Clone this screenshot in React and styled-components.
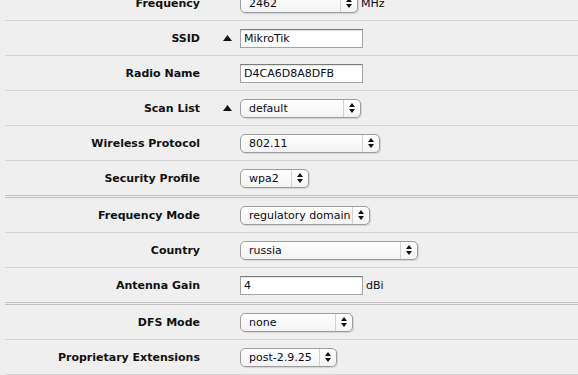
import React from 'react'
import styled, { createGlobalStyle } from 'styled-components'

const GlobalStyle = createGlobalStyle`
  html, body {
    margin: 0;
    padding: 0;
    background: #efefef;
    overflow: hidden;
  }
  body {
    font-family: "DejaVu Sans", Verdana, sans-serif;
  }
`

const Page = styled.div`
  width: 578px;
  height: 375px;
  overflow: hidden;
  background: #efefef;
`

const Form = styled.div`
  margin: -14px 0 0 5px;
`

const Row = styled.div`
  display: grid;
  grid-template-columns: 195px 40px 1fr;
  align-items: center;
  height: 34px;
  border-bottom: ${(p) => (p.groupEnd ? '3px double #c2c2c2' : '1px solid #d6d6d6')};
`

const Label = styled.div`
  text-align: right;
  font-size: 11px;
  font-weight: bold;
  color: #111;
  white-space: nowrap;
`

const ToggleCell = styled.div`
  display: flex;
  justify-content: flex-end;
  padding-right: 8px;
`

const Field = styled.div`
  display: flex;
  align-items: center;
  gap: 3px;
`

const TextInput = styled.div`
  box-sizing: border-box;
  width: ${(p) => p.width}px;
  height: 19px;
  background: #fff;
  border: 1px solid #a3a3a3;
  border-top-color: #7a7a7a;
  box-shadow: inset 0 1px 1px rgba(0, 0, 0, 0.12);
  font-size: 11px;
  line-height: 17px;
  padding-left: 3px;
  color: #0a0a1a;
  white-space: nowrap;
`

const SelectBox = styled.div`
  box-sizing: border-box;
  display: flex;
  width: ${(p) => p.width}px;
  height: 19px;
  border: 1px solid #9c9c9c;
  border-radius: 5px;
  background: linear-gradient(#ffffff, #f3f3f3);
  box-shadow: 1px 1px 1px rgba(0, 0, 0, 0.12);
`

const SelectText = styled.div`
  flex: 1;
  font-size: 11px;
  line-height: 17px;
  padding-left: 8px;
  color: #0a0a1a;
  white-space: nowrap;
  overflow: hidden;
`

const SelectArrows = styled.div`
  width: 16px;
  border-left: 1px solid #d2d2d2;
  display: flex;
  align-items: center;
  justify-content: center;
`

const Unit = styled.span`
  font-size: 11px;
  color: #0a0a1a;
`

const Toggle = () => (
  <svg width="9" height="6" viewBox="0 0 9 6">
    <path d="M0 6 L4.5 0 L9 6 Z" fill="#111" />
  </svg>
)

const Arrows = () => (
  <svg width="6" height="10" viewBox="0 0 6 10">
    <path d="M0 4 L3 0 L6 4 Z" fill="#111" />
    <path d="M0 6 L3 10 L6 6 Z" fill="#111" />
  </svg>
)

const Select = ({ width, value }) => (
  <SelectBox width={width}>
    <SelectText>{value}</SelectText>
    <SelectArrows>
      <Arrows />
    </SelectArrows>
  </SelectBox>
)

const rows = [
  { label: 'Frequency', type: 'select', value: '2462', width: 118, unit: 'MHz' },
  { label: 'SSID', type: 'input', value: 'MikroTik', width: 123, toggle: true },
  { label: 'Radio Name', type: 'input', value: 'D4CA6D8A8DFB', width: 123 },
  { label: 'Scan List', type: 'select', value: 'default', width: 121, toggle: true },
  { label: 'Wireless Protocol', type: 'select', value: '802.11', width: 140 },
  { label: 'Security Profile', type: 'select', value: 'wpa2', width: 69, groupEnd: true },
  { label: 'Frequency Mode', type: 'select', value: 'regulatory domain', width: 130 },
  { label: 'Country', type: 'select', value: 'russia', width: 178 },
  { label: 'Antenna Gain', type: 'input', value: '4', width: 123, unit: 'dBi', groupEnd: true },
  { label: 'DFS Mode', type: 'select', value: 'none', width: 113 },
  { label: 'Proprietary Extensions', type: 'select', value: 'post-2.9.25', width: 97 },
]

export default function App() {
  return (
    <Page>
      <GlobalStyle />
      <Form>
        {rows.map((r) => (
          <Row key={r.label} groupEnd={r.groupEnd}>
            <Label>{r.label}</Label>
            <ToggleCell>{r.toggle && <Toggle />}</ToggleCell>
            <Field>
              {r.type === 'select' ? (
                <Select width={r.width} value={r.value} />
              ) : (
                <TextInput width={r.width}>{r.value}</TextInput>
              )}
              {r.unit && <Unit>{r.unit}</Unit>}
            </Field>
          </Row>
        ))}
      </Form>
    </Page>
  )
}
